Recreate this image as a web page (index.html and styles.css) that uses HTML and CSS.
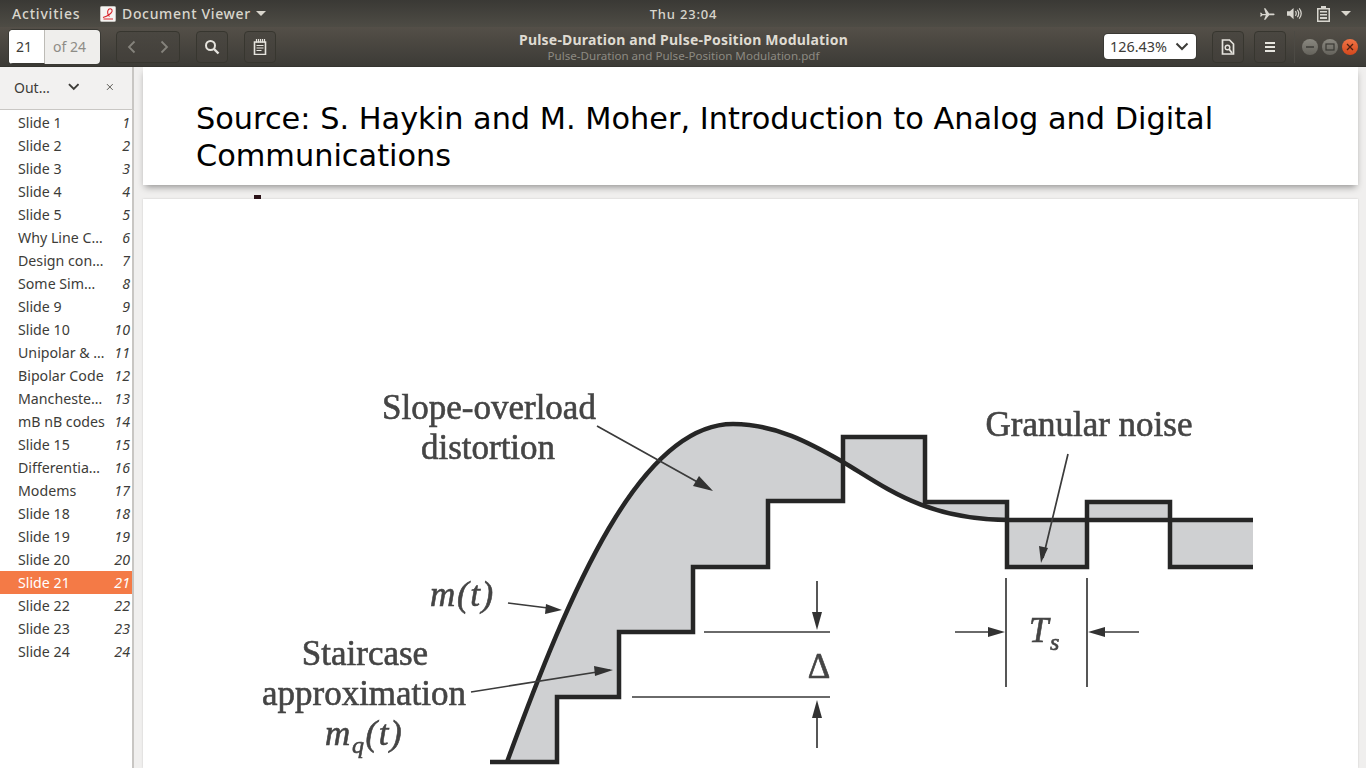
FILE: index.html
```html
<!DOCTYPE html>
<html lang="en">
<head>
<meta charset="utf-8">
<title>Document Viewer</title>
<link rel="stylesheet" href="styles.css">
</head>
<body>
<div class="topbar">
  <div class="top-left">
    <span class="activities">Activities</span>
    <span class="appmenu">
      <svg class="applogo" width="16" height="16" viewBox="0 0 16 16"><rect x="0.5" y="0.5" width="15" height="15" rx="1" fill="#f6f4f2" stroke="#c4c2be"/><path d="M3 11.500C6 10.500 11 8 12 5.500C12.800 3 10 2 8.500 3.500C7 5.500 7.500 9 9.500 10.500M3.500 13H13" fill="none" stroke="#d8262c" stroke-width="1.100"/></svg>
      <span class="appname">Document Viewer</span>
      <span class="caret"></span>
    </span>
  </div>
  <div class="clock">Thu 23:04</div>
  <div class="top-right">
    <svg width="15" height="14" viewBox="0 0 18 16"><path d="M0 6.500h1.500l1.500 1.500h4L4.800 1h1.700l4.500 6.500h4.500c1.500 0 2 .500 2 1s-.5 1-2 1H11L6.500 15H4.800L7 9.500H3L1.500 11H0l.8-2.500z" fill="#d8d6cf"/></svg>
    <svg class="ic-vol" width="15" height="15" viewBox="0 0 16 16"><path d="M0 5.500h3L7 2v12l-4-3.500H0z" fill="#d8d6cf"/><path d="M9 5.500c1 1.500 1 3.500 0 5M11 4c1.800 2.400 1.800 5.600 0 8M13 2.500c2.600 3.300 2.600 7.700 0 11" fill="none" stroke="#d8d6cf" stroke-width="1.300"/></svg>
    <svg class="ic-bat" width="13" height="16" viewBox="0 0 13 16"><path d="M4 0h5v2h4v14H0V2h4z" fill="#d8d6cf"/><rect x="1.500" y="3.500" width="10" height="11" fill="#4a4842"/><path d="M3 5h7v1.500H3zM3 8h7v1.500H3zM3 11h7v2H3z" fill="#d8d6cf"/></svg>
    <span class="caret caret-right"></span>
  </div>
</div>

<header class="headerbar">
  <div class="hb-left">
    <div class="pager"><span class="pager-cur">21</span><span class="pager-of">of 24</span></div>
    <div class="btn btn-nav">
      <svg width="14" height="14" viewBox="0 0 14 14"><path d="M9.500 1.500 4 7l5.500 5.500" fill="none" stroke="#85837c" stroke-width="1.800"/></svg>
      <svg width="14" height="14" viewBox="0 0 14 14"><path d="M4.500 1.500 10 7l-5.500 5.500" fill="none" stroke="#85837c" stroke-width="1.800"/></svg>
    </div>
    <div class="btn">
      <svg width="16" height="16" viewBox="0 0 16 16"><circle cx="6.500" cy="6.500" r="4.500" fill="none" stroke="#e6e4de" stroke-width="2"/><path d="m10 10 4.500 4.500" stroke="#e6e4de" stroke-width="2.400"/></svg>
    </div>
    <div class="btn">
      <svg width="14" height="16" viewBox="0 0 14 16"><path d="M1.500 3h11v12.500h-11z" fill="none" stroke="#e6e4de" stroke-width="1.600"/><path d="M3.500 0v3.500M5.500 0v3.500M7.500 0v3.500M9.500 0v3.500M11.500 0v3.500M3.500 6.500h7M3.500 9h7M3.500 11.500h5" stroke="#e6e4de" stroke-width="1.200"/></svg>
    </div>
  </div>
  <div class="hb-title">
    <div class="title">Pulse-Duration and Pulse-Position Modulation</div>
    <div class="subtitle">Pulse-Duration and Pulse-Position Modulation.pdf</div>
  </div>
  <div class="hb-right">
    <div class="zoombox"><span class="zoomval">126.43%</span>
      <svg width="14" height="10" viewBox="0 0 14 10"><path d="m1.500 1.500 5.500 5.500 5.500-5.500" fill="none" stroke="#3d3c38" stroke-width="2"/></svg>
    </div>
    <div class="btn">
      <svg width="14" height="16" viewBox="0 0 14 16"><path d="M1.500 1h7l4 4v10h-11z" fill="none" stroke="#e6e4de" stroke-width="1.700"/><circle cx="6.500" cy="8.500" r="2.300" fill="none" stroke="#e6e4de" stroke-width="1.400"/><path d="m8 10 3 4" stroke="#e6e4de" stroke-width="1.800"/></svg>
    </div>
    <div class="btn">
      <svg width="12" height="12" viewBox="0 0 12 12"><path d="M1 2h10M1 6h10M1 10h10" stroke="#e6e4de" stroke-width="2"/></svg>
    </div>
    <div class="hb-sep"></div>
    <div class="winbtns">
      <span class="wb wb-min"><svg width="10" height="10" viewBox="0 0 10 10"><path d="M1 5h8" stroke="#3a3934" stroke-width="1.400"/></svg></span>
      <span class="wb wb-max"><svg width="10" height="10" viewBox="0 0 10 10"><rect x="1" y="2" width="8" height="6" fill="none" stroke="#3a3934" stroke-width="1.200"/></svg></span>
      <span class="wb wb-close"><svg width="10" height="10" viewBox="0 0 10 10"><path d="m2 2 6 6M8 2l-6 6" stroke="#4a2012" stroke-width="1.300"/></svg></span>
    </div>
  </div>
</header>

<main class="main">
  <aside class="sidebar">
    <div class="side-head">
      <span class="side-title">Out…</span>
      <svg class="side-chev" width="12" height="8" viewBox="0 0 12 8"><path d="m1 1 5 5 5-5" fill="none" stroke="#3d3c38" stroke-width="2"/></svg>
      <svg class="side-x" width="8" height="8" viewBox="0 0 8 8"><path d="m1 1 6 6M7 1 1 7" stroke="#55544f" stroke-width="1"/></svg>
    </div>
    <ul class="outline">
      <li><span>Slide 1</span><i>1</i></li>
      <li><span>Slide 2</span><i>2</i></li>
      <li><span>Slide 3</span><i>3</i></li>
      <li><span>Slide 4</span><i>4</i></li>
      <li><span>Slide 5</span><i>5</i></li>
      <li><span>Why Line C…</span><i>6</i></li>
      <li><span>Design con…</span><i>7</i></li>
      <li><span>Some Sim…</span><i>8</i></li>
      <li><span>Slide 9</span><i>9</i></li>
      <li><span>Slide 10</span><i>10</i></li>
      <li><span>Unipolar &amp; …</span><i>11</i></li>
      <li><span>Bipolar Code</span><i>12</i></li>
      <li><span>Mancheste…</span><i>13</i></li>
      <li><span>mB nB codes</span><i>14</i></li>
      <li><span>Slide 15</span><i>15</i></li>
      <li><span>Differentia…</span><i>16</i></li>
      <li><span>Modems</span><i>17</i></li>
      <li><span>Slide 18</span><i>18</i></li>
      <li><span>Slide 19</span><i>19</i></li>
      <li><span>Slide 20</span><i>20</i></li>
      <li class="selected"><span>Slide 21</span><i>21</i></li>
      <li><span>Slide 22</span><i>22</i></li>
      <li><span>Slide 23</span><i>23</i></li>
      <li><span>Slide 24</span><i>24</i></li>
    </ul>
  </aside>
  <section class="doc">
    <div class="page page-one">
      <p class="source">Source: S. Haykin and M. Moher, Introduction to Analog and Digital<br>Communications</p>
    </div>
    <div class="gap"><span class="speck"></span></div>
    <div class="page page-two">
      <svg class="figure" width="1215" height="569" viewBox="143 199 1215 569">
        <defs>
          <filter id="soft" x="-5%" y="-5%" width="110%" height="110%"><feGaussianBlur stdDeviation="0.5"/></filter>
        </defs>
        <g filter="url(#soft)">
          <path class="shade" d="M507 762C570 590 640 424 733 424C775 424 810 443 843 462C885 487 925 520 1010 520H1253V567H1170V502H1087V567H1007V502H925V437H843V501H768V567H693V632H619V697H557V762Z"/>
          <path class="curve" d="M507 762C570 590 640 424 733 424C775 424 810 443 843 462C885 487 925 520 1010 520H1253"/>
          <path class="stair" d="M490 762H557V697H619V632H693V567H768V501H843V437H925V502H1007V567H1087V502H1170V567H1253"/>
          <path class="thin" d="M597 426 710 489M508 603 556 609M471 692 610 670M1068 454 1043 558M817 581V622M704 632H830M632 697H830M817 708V748M1006 578V687M1087 578V687M955 632H1000M1094 632H1139"/>
          <path class="head" d="M713 491 693 486 699 476ZM562 610 545 614 546 604ZM613 670 595 676 594 666ZM1041 563 1039 546 1048 548ZM817 630 812 612H822ZM817 700 812 718H822ZM1005 632 988 627V637ZM1088 632 1105 627V637Z"/>
          <g class="fig-text">
            <text x="489" y="419" text-anchor="middle">Slope-overload</text>
            <text x="488" y="459" text-anchor="middle">distortion</text>
            <text x="1089" y="436" text-anchor="middle">Granular noise</text>
            <text x="365" y="665" text-anchor="middle">Staircase</text>
            <text x="364" y="705" text-anchor="middle">approximation</text>
            <text x="430" y="606" class="it">m(t)</text>
            <text x="325" y="745" class="it">m<tspan class="sub" dy="8">q</tspan><tspan dy="-8">(t)</tspan></text>
            <text x="819" y="678" text-anchor="middle">Δ</text>
            <text x="1029" y="642" class="it">T<tspan class="sub" dy="8">s</tspan></text>
          </g>
        </g>
      </svg>
    </div>
  </section>
</main>
</body>
</html>
```

FILE: styles.css
```css
* { box-sizing: border-box; }
html, body { margin: 0; padding: 0; height: 100%; }
body {
  width: 1366px;
  height: 768px;
  overflow: hidden;
  display: flex;
  flex-direction: column;
  font-family: "Noto Sans", "Open Sans", sans-serif;
  font-size: 14px;
  background: #f0efee;
}

.topbar {
  height: 27px;
  flex: none;
  display: grid;
  grid-template-columns: 1fr auto 1fr;
  align-items: center;
  padding: 0 15px 0 12px;
  background: linear-gradient(#3a3935, #4e4c45);
  color: #d9d6cd;
  font-weight: 500;
  letter-spacing: 0.8px;
}
.top-left { display: flex; align-items: center; }
.activities { width: 88px; }
.appmenu { display: flex; align-items: center; }
.applogo { margin-right: 6px; }
.appname { margin-right: 5px; letter-spacing: 0.66px; }
.caret {
  width: 0; height: 0;
  border-left: 5px solid transparent;
  border-right: 5px solid transparent;
  border-top: 5px solid #d9d6cd;
}
.clock { font-size: 13px; margin-left: 1px; margin-right: -3px; }
.top-right { display: flex; align-items: center; justify-content: flex-end; }
.ic-vol { margin-left: 12px; }
.ic-bat { margin-left: 15px; }
.caret-right { margin-left: 11px; }

.headerbar {
  height: 40px;
  flex: none;
  display: grid;
  grid-template-columns: 1fr auto 1fr;
  align-items: center;
  padding: 0 8px 0 9px;
  background: linear-gradient(#544f48, #3c3b36);
  border-bottom: 1px solid #35342f;
}
.hb-left, .hb-right { display: flex; align-items: center; }
.hb-left { gap: 16px; }
.hb-right { justify-content: flex-end; }
.pager {
  width: 91px;
  height: 34px;
  display: flex;
  border-radius: 4px;
  overflow: hidden;
  background: #efeeec;
  box-shadow: 0 0 0 1px #3a3934;
}
.pager-cur {
  width: 36px;
  padding-left: 7px;
  line-height: 33px;
  background: #fff;
  color: #3d3c38;
  border-right: 1px solid #bdbbb6;
  border-bottom: 1px solid #3a3934;
}
.pager-of { padding-left: 8px; line-height: 33px; color: #8e8c86; }
.btn {
  width: 32px;
  height: 32px;
  display: flex;
  align-items: center;
  justify-content: center;
  border: 1px solid #37362f;
  border-radius: 4px;
  background: linear-gradient(#4a4741, #423f3a);
}
.btn-nav { width: 64px; gap: 18px; }
.hb-right .btn { margin-left: 16px; }
.hb-right .btn + .btn { margin-left: 10px; }
.hb-title { text-align: center; line-height: 16px; padding-top: 3px; }
.title { font-size: 14px; font-weight: 700; letter-spacing: 0.2px; color: #dfdbd2; }
.subtitle { font-size: 11.6px; color: #8d8a82; }
.zoombox {
  width: 92px;
  height: 25px;
  display: flex;
  align-items: center;
  justify-content: space-between;
  padding: 0 7px 0 6px;
  background: #fff;
  border-radius: 4px;
  box-shadow: 0 0 0 1px #3a3934;
  color: #3d3c38;
  font-size: 14.4px;
}
.hb-sep { width: 1px; height: 32px; margin: 0 7px 0 8px; background: #4c4a44; }
.winbtns { display: flex; gap: 4px; }
.wb {
  width: 16px;
  height: 16px;
  display: flex;
  align-items: center;
  justify-content: center;
  border-radius: 50%;
}
.wb-min, .wb-max { background: linear-gradient(#8a8880, #65635c); }
.wb-close { background: linear-gradient(#f07446, #d3481d); }

.main { flex: 1; min-height: 0; display: flex; }
.sidebar {
  width: 134px;
  flex: none;
  background: #fff;
  border-right: 2px solid #c8c6c3;
  display: flex;
  flex-direction: column;
}
.side-head {
  height: 43px;
  display: flex;
  align-items: center;
  padding: 0 18px 2px 14px;
  background: #f2f1f0;
  border-bottom: 1px solid #c9c7c4;
  color: #3d3c38;
}
.side-title { width: 55px; }
.side-chev { margin-right: 27px; margin-left: 1px; }
.outline { list-style: none; margin: 1px 0 0; padding: 0; color: #3d3c38; font-size: 14.2px; }
.outline li {
  height: 23px;
  line-height: 23px;
  display: flex;
  justify-content: space-between;
  padding: 0 2px 0 18px;
  white-space: nowrap;
}
.outline i { font-style: italic; }
.outline .selected { background: #f47a46; color: #fff; }

.doc { flex: 1; min-width: 0; overflow: hidden; padding: 0 8px 0 9px; background: #f0efee; }
.page { background: #fff; }
.page-one {
  height: 118px;
  padding: 33px 53px 0;
  box-shadow: 0 4px 7px -2px rgba(0, 0, 0, 0.4);
}
.source {
  margin: 0;
  font-family: "DejaVu Sans", sans-serif;
  font-size: 30.37px;
  line-height: 37px;
  color: #000;
}
.gap { height: 14px; display: flex; align-items: flex-end; padding-left: 111px; }
.speck { width: 7px; height: 4px; background: #2a1218; }
.page-two { height: 569px; box-shadow: 0 0 2px rgba(0, 0, 0, 0.15); }
.figure { display: block; }
.shade { fill: #cfd0d2; stroke: none; }
.stair { fill: none; stroke: #262626; stroke-width: 4.5; stroke-linejoin: miter; }
.curve { fill: none; stroke: #262626; stroke-width: 4.5; }
.thin { fill: none; stroke: #3a3a3a; stroke-width: 1.7; }
.head { fill: #333; }
.fig-text { font-family: "Liberation Serif", serif; font-size: 35px; fill: #444; stroke: #444; stroke-width: 0.6; }
.it { font-style: italic; letter-spacing: 1.6px; }
.sub { font-size: 24px; }
```
